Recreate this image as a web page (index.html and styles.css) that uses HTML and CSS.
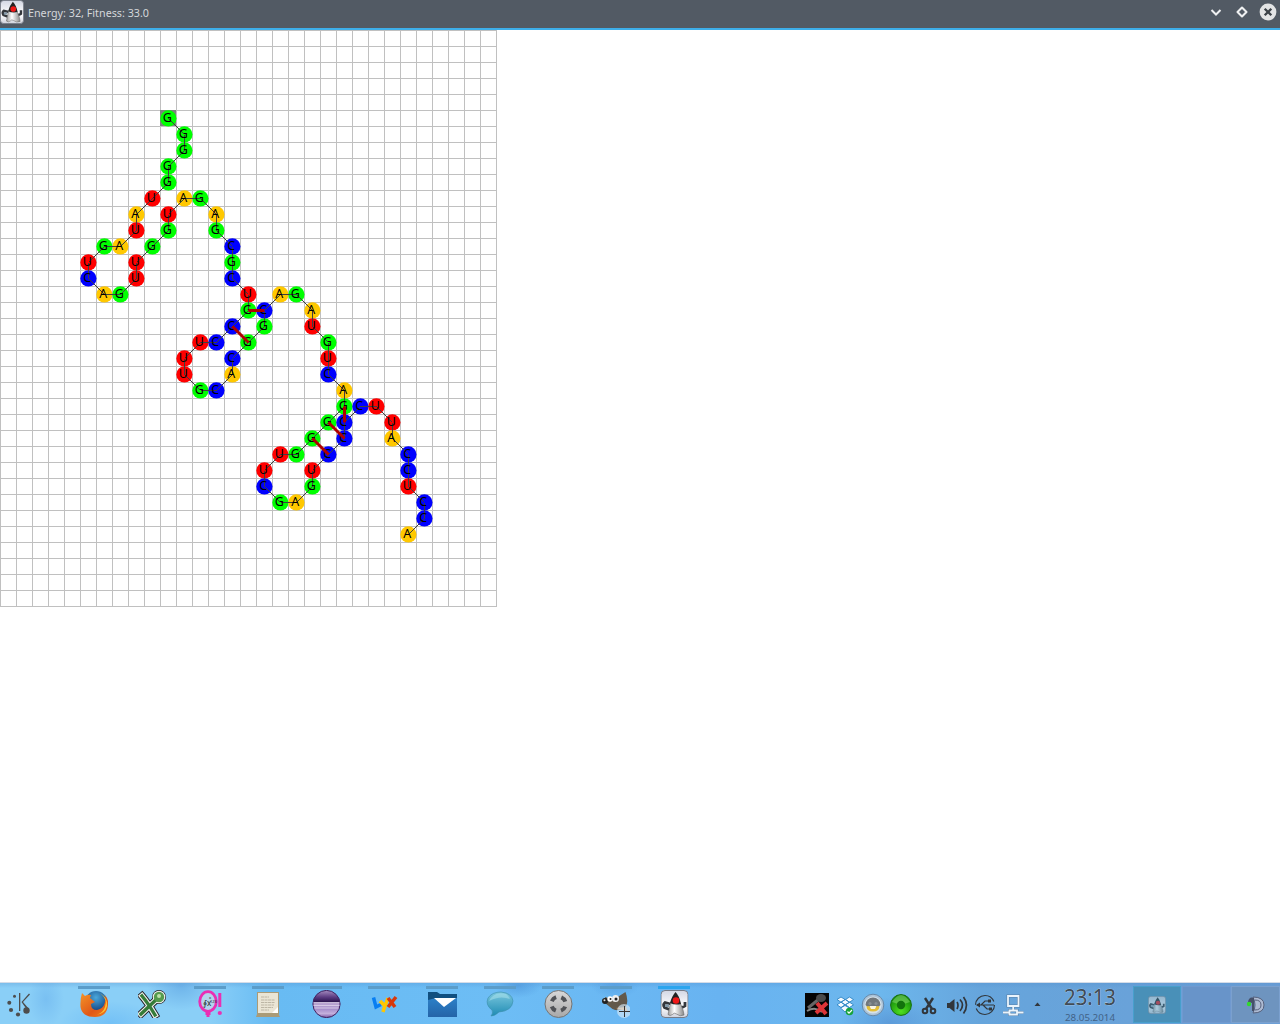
FILE: index.html
```html
<!DOCTYPE html>
<html lang="en">
<head>
<meta charset="utf-8">
<title>Energy: 32, Fitness: 33.0</title>
<link rel="stylesheet" href="styles.css">
</head>
<body>
<svg class="defs" aria-hidden="true">
  <defs>
    <linearGradient id="tile" x1="0" y1="0" x2="0" y2="1"><stop offset="0" stop-color="#d3d7e4"/><stop offset=".6" stop-color="#fff"/><stop offset="1" stop-color="#cfd2dc"/></linearGradient>
    <linearGradient id="body" x1="0" x2="1"><stop offset="0" stop-color="#999"/><stop offset=".4" stop-color="#fff"/><stop offset="1" stop-color="#888"/></linearGradient>
    <linearGradient id="folder" x1="0" y1="0" x2="0" y2="1"><stop offset="0" stop-color="#2c80c8"/><stop offset="1" stop-color="#2464a8"/></linearGradient>
    <linearGradient id="purple" x1="0" y1="0" x2="0" y2="1"><stop offset="0" stop-color="#a58cc0"/><stop offset=".25" stop-color="#5a3a80"/><stop offset=".42" stop-color="#2c1650"/><stop offset=".48" stop-color="#b8a4d0"/><stop offset=".7" stop-color="#a890cc"/><stop offset=".85" stop-color="#c4b0dc"/><stop offset="1" stop-color="#7a58a4"/></linearGradient>
    <linearGradient id="bubble" x1="0" y1="0" x2="0" y2="1"><stop offset="0" stop-color="#7cc8de"/><stop offset="1" stop-color="#1f8cb4"/></linearGradient>
    <radialGradient id="globe" cx=".5" cy=".3" r=".7"><stop offset="0" stop-color="#4aa8dc"/><stop offset="1" stop-color="#0c3878"/></radialGradient>
    <linearGradient id="fox" x1="0" y1="0" x2="1" y2="1"><stop offset="0" stop-color="#f49428"/><stop offset=".6" stop-color="#e05818"/><stop offset="1" stop-color="#f08020"/></linearGradient>
    <linearGradient id="ring" x1="0" y1="0" x2="0" y2="1"><stop offset="0" stop-color="#d8d8d8"/><stop offset="1" stop-color="#a8a8a8"/></linearGradient>
    <radialGradient id="green" cx=".5" cy=".8" r=".8"><stop offset="0" stop-color="#50e020"/><stop offset="1" stop-color="#0c8008"/></radialGradient>
    <symbol id="duke" viewBox="0 0 28 28">
      <rect x=".5" y=".5" width="27" height="27" rx="4" fill="url(#tile)" stroke="#777c88"/>
      <path d="M10 14L4.500 12.500Q2 14.500 4 17.500L9 19.500M18 17q4 1 6.500-1v-4" fill="none" stroke="#34373c" stroke-width="2.800"/>
      <path d="M4.500 14.500h4v2.500h-4z" fill="#8298a8"/>
      <path d="M12 8Q9 15 7.500 24.500q2 2 4.500 0 1.500-2.500 4-.5 3.500 3 7.500 1-.5-5-2.500-9Q19 11 17 8z" fill="url(#body)" stroke="#666" stroke-width=".6"/>
      <path d="M15 2Q11.500 6 9.500 13q5 2.500 11 1Q19 6 15 2z" fill="#222"/>
      <circle cx="15.500" cy="10.500" r="3.300" fill="#f01818"/>
    </symbol>
  </defs>
</svg>

<header class="titlebar">
  <svg class="title-icon" viewBox="0 0 28 28"><use href="#duke"/></svg>
  <svg class="title-text" width="130" height="28"><text x="0" y="17" textLength="121" lengthAdjust="spacingAndGlyphs">Energy: 32, Fitness: 33.0</text></svg>
  <svg class="controls" width="80" height="28" viewBox="0 0 80 28">
    <path d="M11.500 10l4.500 4.500L20.500 10" fill="none" stroke="#eff0f1" stroke-width="2"/>
    <path d="M42 7.500l4.500 4.500-4.500 4.500-4.500-4.500z" fill="none" stroke="#eff0f1" stroke-width="2.100" stroke-linejoin="round"/>
    <circle cx="68" cy="12" r="8.400" fill="#e3e4e5"/>
    <path d="M64.700 8.700l6.600 6.600M71.300 8.700l-6.600 6.600" stroke="#3c4248" stroke-width="2.300"/>
  </svg>
</header>

<main class="canvas">
  <svg id="fold" width="497" height="577" viewBox="0 0 497 577"></svg>
</main>

<footer class="panel">
  <div class="launcher">
    <svg width="26" height="40" viewBox="0 0 26 40" fill="#4d4d4d">
      <path d="M12 10h1.300v18H12zM22 10.500l1 1-7 7.500 6 7-1.500 1.500L14.500 19z"/>
      <circle cx="19.500" cy="27.500" r="3.200"/><circle cx="11" cy="31.500" r="2.100"/><circle cx="4" cy="27" r="2.100"/><circle cx="2.300" cy="19.800" r="2"/><circle cx="7.500" cy="13.300" r="1.500"/>
    </svg>
  </div>
  <nav class="tasks">
    <div class="task"><svg viewBox="0 0 28 28"><circle cx="16" cy="12" r="11" fill="url(#globe)"/><path d="M2 3l3 3q3-2 6-1l-1 3 5 4-4 2q0 6 6 6 5-1 7-5 2-5 1-10 4 5 3 10-1 12-13 12Q2 27 .5 17 0 9 2 3z" fill="url(#fox)"/><path d="M20 3q8 6 5 14-2 6-8 7.500Q25 24 27 16q1-8-7-13z" fill="#ffc42c"/></svg></div>
    <div class="task idle"><svg viewBox="0 0 28 28"><g stroke-linecap="square" fill="none"><path d="M4 6q6 7 13 19M3 24L20 8" stroke="#222" stroke-width="7.500"/><circle cx="21" cy="7" r="6" fill="#222" stroke="#222" stroke-width="2"/><path d="M4 6q6 7 13 19M3 24L20 8" stroke="#eee" stroke-width="5.700"/><circle cx="21" cy="7" r="6.300" fill="#eee"/><path d="M4 6q6 7 13 19M3 24L20 8" stroke="#367c38" stroke-width="3.400"/></g><circle cx="21" cy="7" r="5.200" fill="#559b4c"/><circle cx="21" cy="6" r="2" fill="#bce0a8"/></svg></div>
    <div class="task"><svg viewBox="0 0 28 28"><ellipse cx="12" cy="11.500" rx="8.300" ry="9.800" fill="#b3d5ed" stroke="#e92fb4" stroke-width="2.800"/><path d="M12 21v6M9.500 23.500h5M23.800 3v14" stroke="#e92fb4" stroke-width="3"/><circle cx="23.800" cy="23" r="2.100" fill="#e92fb4"/><text x="7" y="16" class="formula">∮x</text><text x="13" y="9" class="exponent">x</text><text x="14" y="13" class="exponent">123</text></svg></div>
    <div class="task"><svg viewBox="0 0 28 28"><path d="M3 2h22v23l1 2H2l1-3z" fill="#a99b78"/><path d="M4 3h20v20H4z" fill="#eae5d5"/><path d="M7 7h8M7 10h14M7 12.500h14M7 15h13M7 17.500h12M7 20h8" stroke="#bdb6a5" stroke-dasharray="3 .5"/><path d="M24 17v6h-6z" fill="#fff"/></svg></div>
    <div class="task"><svg viewBox="0 0 28 28" class="full"><circle cx="14" cy="14" r="13.600" fill="url(#purple)" stroke="#40205e"/><path d="M1 12.500h26M1 15.500h26M2 18h24" stroke="#e0d4ec" stroke-width=".8"/></svg></div>
    <div class="task"><svg viewBox="0 0 28 28"><g fill="none" stroke-width="3.500"><path d="M3.500 7.500l2.500 9.500 5-2.500" stroke="#087ef2"/><path d="M10 11l5 5 3-8M15 15l-2 7" stroke="#ffc600"/><path d="M18 8l7 9M26 7l-8 10" stroke="#d8380b"/></g></svg></div>
    <div class="task"><svg viewBox="0 0 29 28" class="full"><path d="M0 2h9l3 2h17v10H0z" fill="#104f80"/><path d="M0 10l8-2h21v19H0z" fill="url(#folder)"/><path d="M6 8h22L16 17z" fill="#fff"/></svg></div>
    <div class="task"><svg viewBox="0 0 28 28"><path d="M6 20Q-1 15 2 8 6 2 15 2q11 1 12 9-1 10-14 11-4 4-8 4 2.500-3 1-6z" fill="url(#bubble)" stroke="#3b8da8" stroke-width=".6"/><path d="M3 11Q8 1 20 4q3 2 4 5-10-4-21 2z" fill="#b5e8f0" opacity=".45"/></svg></div>
    <div class="task"><svg viewBox="0 0 28 28" class="full"><circle cx="14" cy="14" r="13.500" fill="url(#ring)" stroke="#747474"/><circle cx="14" cy="14" r="7.200" fill="none" stroke="#505256" stroke-width="4" stroke-dasharray="6 5.310" stroke-dashoffset="-2.650"/></svg></div>
    <div class="task"><svg viewBox="0 0 28 28"><path d="M3 7l6 2 5-1 9.500-6q3.500 9 0 16-7 4-13 1L3 13z" fill="#62594b"/><circle cx="3" cy="11" r="3" fill="#222"/><circle cx="2.500" cy="10.200" r="1" fill="#ddd"/><circle cx="8" cy="9" r="2.700" fill="#fff"/><circle cx="13.500" cy="8.500" r="3.500" fill="#eee"/><circle cx="8.500" cy="9" r="1" fill="#222"/><circle cx="14" cy="9" r="1.500" fill="#222"/><path d="M14 18l10-1 2 5z" fill="#dba064"/><circle cx="22" cy="21" r="7" fill="#d5e9f8" opacity=".65"/><path d="M22.500 16v11M17 21.500h11" stroke="#333"/></svg></div>
    <div class="task active"><svg viewBox="0 0 28 28" class="full"><use href="#duke"/></svg></div>
  </nav>
  <div class="tray">
    <svg class="tray-icons" width="240" height="40" viewBox="0 0 240 40">
      <path d="M0 10h24v24H0z" fill="#050505"/><path d="M3 25l11-9" stroke="#666" stroke-width="3"/><ellipse cx="16" cy="15" rx="5" ry="4" fill="#4a4a4a"/><path d="M2 28q8-5 15 1" stroke="#888" fill="none" stroke-width="2"/><path d="M12 20l9 11M22 20L11 30" stroke="#dc3437" stroke-width="4"/>
      <g fill="#f4faff" stroke="#2f86c4" stroke-width=".9" stroke-linejoin="round"><path d="M36 14l4 2.500-4 2.700-4-2.700zM44.500 14l4 2.500-4 2.700-4-2.700zM36 19.200l4 2.600-4 2.700-4-2.700zM44.500 19.200l4 2.600-4 2.700-4-2.700zM40.200 16.500l4.300 2.700-4.300 2.600-4.200-2.600zM35.500 25l4.500-2.500 4.500 2.500-4.500 4z"/></g><circle cx="44.500" cy="28.500" r="3.800" fill="#18a33b"/><path d="M42.500 28.500l1.500 1.700 3-3.200" fill="none" stroke="#fff" stroke-width="1.200"/>
      <circle cx="68" cy="22" r="10.800" fill="#adc4d8" stroke="#6588a8"/><circle cx="68" cy="22" r="8.600" fill="#d6e2ea"/><path d="M60.500 22q1-7.500 7.500-7.500t7.500 7.500l-2 2h-11z" fill="#70777c"/><circle cx="65" cy="20.500" r="1.600" fill="#888f94"/><circle cx="71" cy="20.500" r="1.600" fill="#888f94"/><path d="M61.500 23.500q2-1 4 .5h5q2-1.500 4-.5-.5 5-6.500 5t-6.500-5z" fill="#e4bf37"/><path d="M64.500 23h7l-1.500 3h-4z" fill="#f8f4e4"/>
      <circle cx="96" cy="22" r="10.400" fill="url(#green)" stroke="#17700c"/><path d="M87 19q9-14 18 0-9 4-18 0z" fill="#9be483" opacity=".45"/><circle cx="96" cy="22" r="4.200" fill="#13720d"/>
      <g fill="none" stroke="#31363b"><path d="M120 15l7 11M128 15l-7 11" stroke-width="2.400"/><circle cx="120" cy="28" r="2.300" stroke-width="2"/><circle cx="128" cy="28" r="2.300" stroke-width="2"/>
      <path d="M152 19q2 3 0 7M155 16.500q5 5.500 0 11.500M158.500 14q6 8 0 16.500" stroke-width="1.700"/><circle cx="180" cy="22" r="9.500" stroke-width="1.100" stroke-dasharray="26 3.800"/><path d="M172 22h17M176 22l4-4h4M178 22l4 4h3" stroke-width="1.200"/></g>
      <path d="M142 20h2.500l5-4v13l-5-4H142zM171 22l4-2.500v5zM183 16.500h3v3h-3zM184 24.500h3v3h-3z" fill="#31363b"/>
      <g fill="none"><path d="M203 13h10.500v10H203zM208.200 23v4.500M198 29.500h6.500M212 29.500h6.500M204.500 27.500h7.500v4h-7.500z" stroke="#5880a8" stroke-width="3"/><path d="M203 13h10.500v10H203zM208.200 23v4.500M198 29.500h6.500M212 29.500h6.500M204.500 27.500h7.500v4h-7.500z" stroke="#eaf4fc" stroke-width="1.800"/></g>
      <path d="M229.500 23l3-3.500 3 3.500z" fill="#31363b"/>
    </svg>
    <svg class="clock" width="66" height="43"><text class="time" x="5" y="24" textLength="52" lengthAdjust="spacingAndGlyphs">23:13</text><text class="date" x="6" y="40" textLength="50" lengthAdjust="spacingAndGlyphs">28.05.2014</text></svg>
    <div class="pager"><svg width="18" height="18" viewBox="0 0 28 28"><use href="#duke"/></svg></div>
    <div class="desktop"></div>
    <div class="corner"><svg width="20" height="20" viewBox="0 0 20 20"><path d="M7 2q11 0 11 8T7 18q4-8 0-16z" fill="#aebbd3" stroke="#56617c"/><path d="M9 5q6 0 6 5t-6 5" fill="none" stroke="#58627d"/><path d="M2 7q1-6 6-4v13H6V8z" fill="#475069"/><circle cx="3" cy="9" r="2.200" fill="#32d82c"/></svg></div>
  </div>
</footer>
<script src="fold.js"></script>
</body>
</html>
```
FILE: styles.css
```css
* { box-sizing: border-box; }
body {
  margin: 0;
  height: 1024px;
  display: flex;
  flex-direction: column;
  overflow: hidden;
  background: #fff;
  font-family: "Noto Sans", "Open Sans", sans-serif;
}
svg { display: block; flex: none; }
.defs { position: absolute; width: 0; height: 0; }

.titlebar {
  flex: none;
  height: 30px;
  display: flex;
  background: #525a64;
  border-bottom: 2px solid #3daee9;
}
.title-icon { width: 24px; height: 24px; }
.title-text { margin-left: 4px; font-size: 11px; fill: #d4d7da; }
.controls { margin-left: auto; }

.canvas { flex: 1; min-height: 0; }
.grid { stroke: #c0c0c0; stroke-width: 1; shape-rendering: crispEdges; }
.link { stroke: #404040; stroke-width: 1; shape-rendering: crispEdges; }
.bond { stroke: #b00000; stroke-width: 3; }
.base { font-size: 12.5px; fill: #000; text-anchor: middle; }

.panel {
  flex: none;
  height: 42px;
  display: flex;
  border-top: 1px solid #d4dce8;
  background:
    linear-gradient(#4c88c840, #4c88c800 5px),
    radial-gradient(ellipse 18px 28px at 46px 16px, #6cb4ee90, #6cb4ee00),
    radial-gradient(ellipse 50px 22px at 110px 40px, #6cbcf6c0, #6cbcf600),
    radial-gradient(ellipse 34px 24px at 181px 3px, #62a8e4b0, #62a8e400),
    radial-gradient(ellipse 24px 12px at 518px 3px, #4f98ddb0, #4f98dd00),
    radial-gradient(ellipse 24px 12px at 615px 3px, #4f98dd90, #4f98dd00),
    radial-gradient(ellipse 50px 26px at 890px 40px, #5590d2b0, #5590d200),
    linear-gradient(90deg, #8acff7 0, #8acff7 210px, #68bbf3 270px, #6dbdf5 500px, #68b3f1 720px, #6db7ed 880px, #66a5dc 980px, #6c9fd6 1280px);
}
.launcher { width: 65px; padding-left: 7px; }
.tasks { display: flex; width: 638px; }
.task {
  flex: 1;
  display: flex;
  flex-direction: column;
  align-items: center;
  padding-top: 7px;
}
.task::before { content: ""; width: 32px; height: 3px; margin-top: -4px; margin-bottom: 1px; background: #5b9dca; }
.task.idle::before { background: transparent; }
.task.active::before { background: #2ba5ee; }
.task svg { width: 28px; height: 28px; }
.task svg.full { width: 29px; }
.formula { font-size: 8px; fill: #222; }
.exponent { font-size: 4px; fill: #222; }
.tray { display: flex; margin-left: auto; width: 475px; }
.clock { margin: -2px 0 0 14px; overflow: visible; }
.time { font-size: 22px; fill: #404b55; stroke: #c8dcef; stroke-width: .6px; paint-order: stroke; }
.date { font-size: 9.5px; fill: #426287; }
.pager, .desktop, .corner {
  height: 37px;
  margin-top: 3px;
  display: flex;
  align-items: center;
  justify-content: center;
}
.pager { width: 48px; margin-left: 8px; background: #4990b8; border: 1px solid #479fcc; }
.pager svg { opacity: .55; }
.desktop { width: 49px; margin-left: 1px; background: #6894c9; border: 1px solid #7099cf; }
.corner { width: 49px; background: #6e94bf; border: 1px solid #7ba0ce; }
```
FILE: fold.js
```js
const CELL = 16;
const COLORS = { G: '#00ff00', U: '#ff0000', A: '#ffc800', C: '#0000ff' };

// Each entry: base, column, row on the lattice.
const chain = `G 10 5,G 11 6,G 11 7,G 10 8,G 10 9,U 9 10,A 8 11,U 8 12,A 7 13,G 6 13,
U 5 14,C 5 15,A 6 16,G 7 16,U 8 15,U 8 14,G 9 13,G 10 12,U 10 11,A 11 10,
G 12 10,A 13 11,G 13 12,C 14 13,G 14 14,C 14 15,U 15 16,G 15 17,C 14 18,C 13 19,
U 12 19,U 11 20,U 11 21,G 12 22,C 13 22,A 14 21,C 14 20,G 15 19,G 16 18,C 16 17,
A 17 16,G 18 16,A 19 17,U 19 18,G 20 19,U 20 20,C 20 21,A 21 22,G 21 23,G 20 24,
G 19 25,G 18 26,U 17 26,U 16 27,C 16 28,G 17 29,A 18 29,G 19 28,U 19 27,C 20 26,
C 21 25,C 21 24,C 22 23,U 23 23,U 24 24,A 24 25,C 25 26,C 25 27,U 25 28,C 26 29,
C 26 30,A 25 31`.split(',').map(entry => {
  const [base, col, row] = entry.trim().split(' ');
  return { base, x: col * CELL + 8, y: row * CELL + 8 };
});
const bonds = [[27, 39], [28, 37], [48, 61], [49, 60], [50, 59]];

const svg = document.getElementById('fold');
function add(name, attrs, text) {
  const el = document.createElementNS('http://www.w3.org/2000/svg', name);
  for (const key in attrs) el.setAttribute(key, attrs[key]);
  if (text) el.textContent = text;
  svg.appendChild(el);
}
function line(a, b, cls) {
  add('line', { x1: a.x + .5, y1: a.y + .5, x2: b.x + .5, y2: b.y + .5, class: cls });
}

for (let x = 0; x <= 31; x++) line({ x: x * CELL, y: -.5 }, { x: x * CELL, y: 576.5 }, 'grid');
for (let y = 0; y <= 36; y++) line({ x: -.5, y: y * CELL }, { x: 496.5, y: y * CELL }, 'grid');
add('rect', { x: chain[0].x - 8, y: chain[0].y - 8, width: 16, height: 16, fill: '#808080' });
chain.forEach(n => add('circle', { cx: n.x + .4, cy: n.y + .4, r: 8.1, fill: COLORS[n.base] }));
chain.slice(1).forEach((n, i) => line(chain[i], n, 'link'));
chain.forEach(n => add('text', { x: n.x - .8, y: n.y + 4, class: 'base' }, n.base));
bonds.forEach(([a, b]) => line(chain[a], chain[b], 'bond'));
```
